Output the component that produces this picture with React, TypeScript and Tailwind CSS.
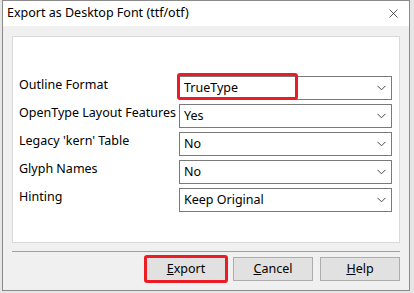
import { X } from "lucide-react";

const font = { fontFamily: '"Noto Sans", "Open Sans", sans-serif' };

const rows = [
    { label: "Outline Format", value: "TrueType" },
    { label: "OpenType Layout Features", value: "Yes" },
    { label: "Legacy 'kern' Table", value: "No" },
    { label: "Glyph Names", value: "No" },
    { label: "Hinting", value: "Keep Original" },
];

function Select({ value }: { value: string }) {
    return (
        <div className="flex h-[24px] w-[213px] items-center justify-between border border-[#7a7a7a] bg-white pl-[4px] pr-[5px]">
            <span className="text-[12.5px] text-black">{value}</span>
            <svg width="9" height="6" viewBox="0 0 9 6" className="text-[#444]">
                <path d="M0.5 0.8 L4.5 4.8 L8.5 0.8" fill="none" stroke="currentColor" strokeWidth="1" />
            </svg>
        </div>
    );
}

function Button({ children, primary }: { children: React.ReactNode; primary?: boolean }) {
    return (
        <button
            className={`flex h-[24px] w-[80px] items-center justify-center border text-[12.5px] text-black ${primary ? "border-[#0078d7] bg-[#e1e1e1]" : "border-[#adadad] bg-[#e1e1e1]"}`}
        >
            {children}
        </button>
    );
}

export default function App() {
    return (
        <div className="relative h-[293px] w-[414px] overflow-hidden bg-[#e6e6e6] pl-[2px]" style={font}>
            <div className="flex h-[291px] w-[408px] flex-col border border-[#8a8a8a] bg-[#f0f0f0]">
                <div className="flex h-[25px] items-center justify-between bg-white pl-[4px] pr-[8px]">
                    <span className="text-[12.5px] text-black">Export as Desktop Font (ttf/otf)</span>
                    <X className="h-[15px] w-[15px] text-black" strokeWidth={1} />
                </div>
                <div className="flex flex-1 flex-col px-[9px] pt-[10px]">
                    <div className="flex h-[207px] flex-col gap-[4px] border border-[#d9d9d9] bg-white pl-[6px] pt-[39px]">
                        {rows.map((r) => (
                            <div key={r.label} className="flex h-[24px]">
                                <span className="w-[160px] text-[12.5px] leading-[18px] text-black">{r.label}</span>
                                <Select value={r.value} />
                            </div>
                        ))}
                    </div>
                    <div className="mt-[8px] h-px bg-[#a0a0a0]" />
                    <div className="mt-[5px] flex justify-end gap-[7px]">
                        <div className="relative">
                            <Button primary>
                                <span><u>E</u>xport</span>
                            </Button>
                            <div className="absolute -inset-[2px] rounded-[3px] border-[3px] border-[#ec1c24]" />
                        </div>
                        <Button><span><u>C</u>ancel</span></Button>
                        <Button><span><u>H</u>elp</span></Button>
                    </div>
                </div>
            </div>
            <div className="absolute left-[177px] top-[73px] h-[27px] w-[121px] rounded-[3px] border-[3px] border-[#ec1c24]" />
        </div>
    );
}
